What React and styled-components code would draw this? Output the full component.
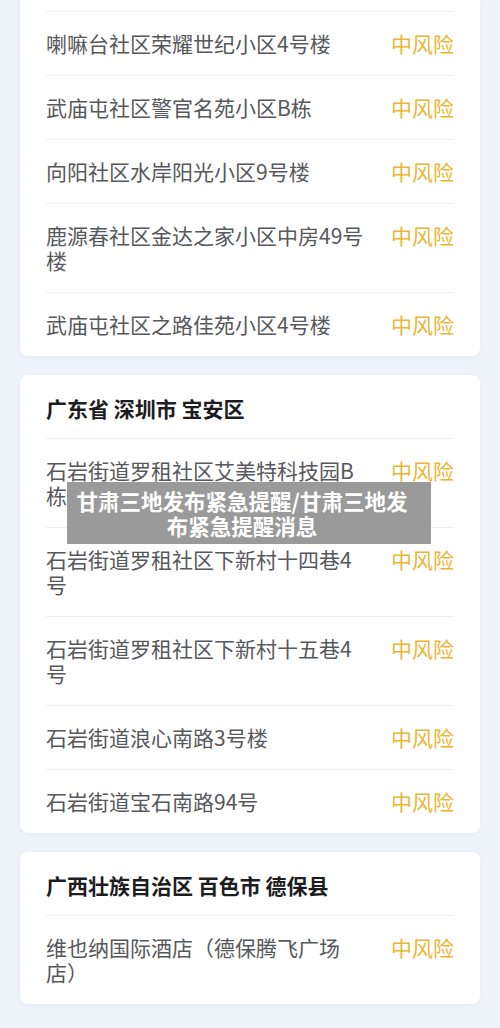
import React from "react";
import styled, { createGlobalStyle } from "styled-components";

const GlobalStyle = createGlobalStyle`
  html, body {
    margin: 0;
    padding: 0;
    background: #eef3fa;
    font-family: "Noto Sans CJK SC", "Noto Sans", sans-serif;
  }
  * { box-sizing: border-box; }
`;

const Page = styled.div`
  position: relative;
  display: flex;
  flex-direction: column;
  gap: 19px;
  padding: 0 20px 24px;
`;

const Card = styled.section`
  background: #ffffff;
  border-radius: ${(p) => (p.$cut ? "0 0 8px 8px" : "8px")};
  padding-top: ${(p) => (p.$cut ? "11px" : "0")};
  box-shadow: 0 1px 4px rgba(120, 140, 170, 0.08);
`;

const Header = styled.h2`
  margin: 0;
  padding: 21px 26px 17px;
  font-size: 21px;
  line-height: 25px;
  font-weight: 700;
  color: #1d1d1f;
`;

const Row = styled.div`
  display: flex;
  align-items: flex-start;
  gap: 24px;
  margin: 0 26px;
  padding: 19px 0;
  border-top: 1px solid #efefef;
`;

const Name = styled.div`
  flex: 1;
  font-size: 21px;
  line-height: 25px;
  color: #56585b;
`;

const Risk = styled.span`
  flex: none;
  font-size: 21px;
  line-height: 25px;
  color: #ebb634;
`;

const Caption = styled.div`
  position: absolute;
  left: 67px;
  top: 482px;
  width: 364px;
  padding: 6px 22px 6px 8px;
  background: rgba(140, 140, 140, 0.88);
  color: #ffffff;
  font-size: 21.5px;
  line-height: 25px;
  font-weight: 700;
  text-align: center;
`;

const sections = [
  {
    cut: true,
    items: [
      "喇嘛台社区荣耀世纪小区4号楼",
      "武庙屯社区警官名苑小区B栋",
      "向阳社区水岸阳光小区9号楼",
      "鹿源春社区金达之家小区中房49号楼",
      "武庙屯社区之路佳苑小区4号楼",
    ],
  },
  {
    title: "广东省 深圳市 宝安区",
    items: [
      "石岩街道罗租社区艾美特科技园B栋",
      "石岩街道罗租社区下新村十四巷4号",
      "石岩街道罗租社区下新村十五巷4号",
      "石岩街道浪心南路3号楼",
      "石岩街道宝石南路94号",
    ],
  },
  {
    title: "广西壮族自治区 百色市 德保县",
    items: ["维也纳国际酒店（德保腾飞广场店）"],
  },
];

export default function App() {
  return (
    <>
      <GlobalStyle />
      <Page>
        {sections.map((s, i) => (
          <Card key={i} $cut={s.cut}>
            {s.title && <Header>{s.title}</Header>}
            {s.items.map((name) => (
              <Row key={name}>
                <Name>{name}</Name>
                <Risk>中风险</Risk>
              </Row>
            ))}
          </Card>
        ))}
        <Caption>甘肃三地发布紧急提醒/甘肃三地发布紧急提醒消息</Caption>
      </Page>
    </>
  );
}
